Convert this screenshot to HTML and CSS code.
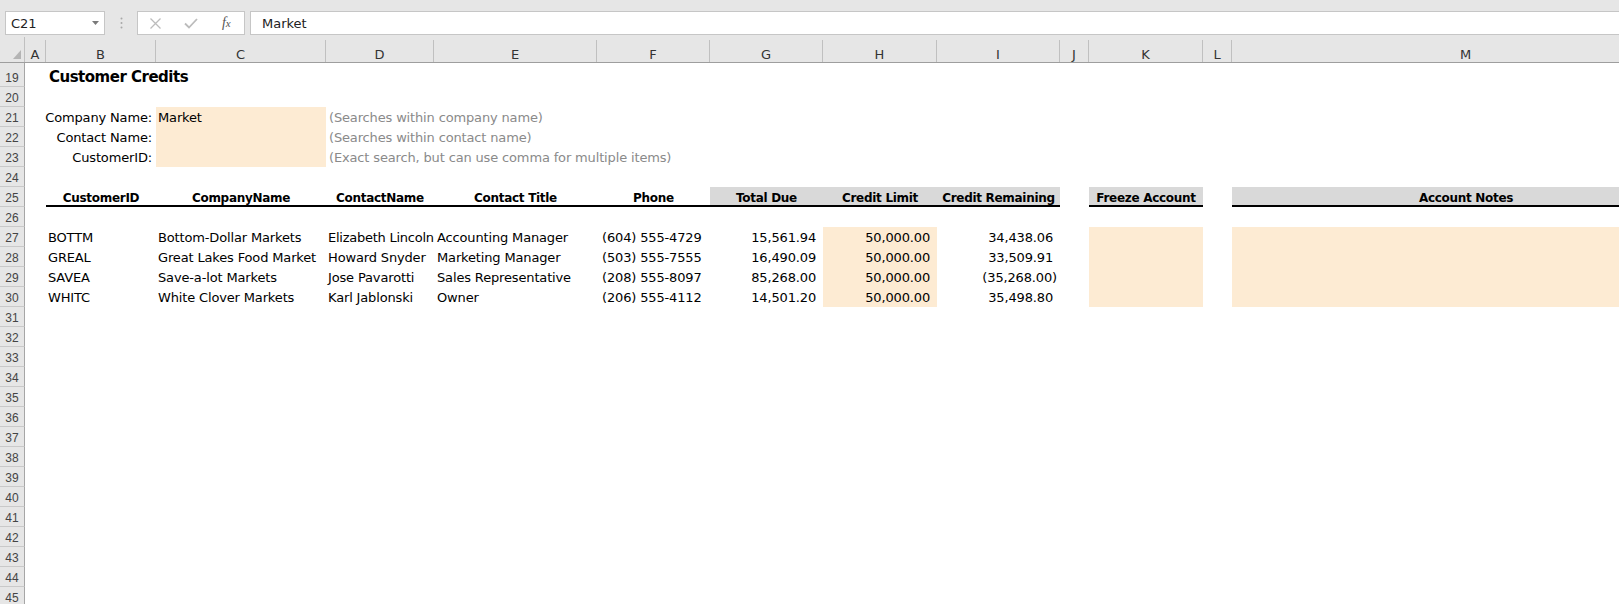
FILE: index.html
```html
<!DOCTYPE html>
<html>
<head>
<meta charset="utf-8">
<title>Customer Credits</title>
<link rel="stylesheet" href="styles.css">
</head>
<body>
<div class="app">
  <div class="toolbar">
    <div class="namebox">
      <span class="nb-text">C21</span>
      <svg class="nb-arrow" width="7" height="4" viewBox="0 0 7 4"><polygon points="0,0 7,0 3.5,4" fill="#7a7a7a"/></svg>
    </div>
    <svg class="grip" width="3" height="12" viewBox="0 0 3 12">
      <circle cx="1.5" cy="1.5" r="1" fill="#a8a8a8"/>
      <circle cx="1.5" cy="6" r="1" fill="#a8a8a8"/>
      <circle cx="1.5" cy="10.5" r="1" fill="#a8a8a8"/>
    </svg>
    <div class="fxbox">
      <span class="fx-slot"><svg width="11" height="11" viewBox="0 0 11 11"><path d="M0.5 0.5 L10.5 10.5 M10.5 0.5 L0.5 10.5" stroke="#bcbcbc" stroke-width="1.3" fill="none"/></svg></span>
      <span class="fx-slot"><svg width="14" height="11" viewBox="0 0 14 11"><path d="M1 5.5 L5 9.5 L13 1" stroke="#bcbcbc" stroke-width="1.8" fill="none"/></svg></span>
      <span class="fx-slot"><span class="fx">f<span class="fxx">x</span></span></span>
    </div>
    <div class="formula">Market</div>
  </div>

  <div class="sheet">
    <div class="row colheads">
      <div class="corner"><svg width="8" height="9" viewBox="0 0 8 9"><polygon points="8,0 8,9 0,9" fill="#b4b4b4"/></svg></div>
      <div class="ch">A</div><div class="ch">B</div><div class="ch">C</div><div class="ch">D</div>
      <div class="ch">E</div><div class="ch">F</div><div class="ch">G</div><div class="ch">H</div>
      <div class="ch">I</div><div class="ch">J</div><div class="ch">K</div><div class="ch">L</div>
      <div class="ch">M</div>
    </div>

    <div class="row tall">
      <div class="rh">19</div><div class="c"></div>
      <div class="c title">Customer Credits</div>
    </div>
    <div class="row"><div class="rh">20</div></div>
    <div class="row">
      <div class="rh">21</div><div class="c"></div>
      <div class="c lbl">Company Name:</div>
      <div class="c peach">Market</div>
      <div class="c hint">(Searches within company name)</div>
    </div>
    <div class="row">
      <div class="rh">22</div><div class="c"></div>
      <div class="c lbl">Contact Name:</div>
      <div class="c peach"></div>
      <div class="c hint">(Searches within contact name)</div>
    </div>
    <div class="row">
      <div class="rh">23</div><div class="c"></div>
      <div class="c lbl">CustomerID:</div>
      <div class="c peach"></div>
      <div class="c hint">(Exact search, but can use comma for multiple items)</div>
    </div>
    <div class="row"><div class="rh">24</div></div>
    <div class="row">
      <div class="rh">25</div><div class="c"></div>
      <div class="c th">CustomerID</div>
      <div class="c th">CompanyName</div>
      <div class="c th">ContactName</div>
      <div class="c th">Contact Title</div>
      <div class="c th">Phone</div>
      <div class="c th gray">Total Due</div>
      <div class="c th gray">Credit Limit</div>
      <div class="c th gray">Credit Remaining</div>
      <div class="c"></div>
      <div class="c th gray">Freeze Account</div>
      <div class="c"></div>
      <div class="c th gray">Account Notes</div>
    </div>
    <div class="row"><div class="rh">26</div></div>
    <div class="row">
      <div class="rh">27</div><div class="c"></div>
      <div class="c">BOTTM</div>
      <div class="c">Bottom-Dollar Markets</div>
      <div class="c tight">Elizabeth Lincoln</div>
      <div class="c pl3">Accounting Manager</div>
      <div class="c ph">(604) 555-4729</div>
      <div class="c num">15,561.94</div>
      <div class="c num peach">50,000.00</div>
      <div class="c num">34,438.06</div>
      <div class="c"></div>
      <div class="c peach"></div>
      <div class="c"></div>
      <div class="c peach"></div>
    </div>
    <div class="row">
      <div class="rh">28</div><div class="c"></div>
      <div class="c">GREAL</div>
      <div class="c">Great Lakes Food Market</div>
      <div class="c">Howard Snyder</div>
      <div class="c pl3">Marketing Manager</div>
      <div class="c ph">(503) 555-7555</div>
      <div class="c num">16,490.09</div>
      <div class="c num peach">50,000.00</div>
      <div class="c num">33,509.91</div>
      <div class="c"></div>
      <div class="c peach"></div>
      <div class="c"></div>
      <div class="c peach"></div>
    </div>
    <div class="row">
      <div class="rh">29</div><div class="c"></div>
      <div class="c">SAVEA</div>
      <div class="c">Save-a-lot Markets</div>
      <div class="c">Jose Pavarotti</div>
      <div class="c pl3">Sales Representative</div>
      <div class="c ph">(208) 555-8097</div>
      <div class="c num">85,268.00</div>
      <div class="c num peach">50,000.00</div>
      <div class="c num neg">(35,268.00)</div>
      <div class="c"></div>
      <div class="c peach"></div>
      <div class="c"></div>
      <div class="c peach"></div>
    </div>
    <div class="row">
      <div class="rh">30</div><div class="c"></div>
      <div class="c">WHITC</div>
      <div class="c">White Clover Markets</div>
      <div class="c">Karl Jablonski</div>
      <div class="c pl3">Owner</div>
      <div class="c ph">(206) 555-4112</div>
      <div class="c num">14,501.20</div>
      <div class="c num peach">50,000.00</div>
      <div class="c num">35,498.80</div>
      <div class="c"></div>
      <div class="c peach"></div>
      <div class="c"></div>
      <div class="c peach"></div>
    </div>
    <div class="row"><div class="rh">31</div></div>
    <div class="row"><div class="rh">32</div></div>
    <div class="row"><div class="rh">33</div></div>
    <div class="row"><div class="rh">34</div></div>
    <div class="row"><div class="rh">35</div></div>
    <div class="row"><div class="rh">36</div></div>
    <div class="row"><div class="rh">37</div></div>
    <div class="row"><div class="rh">38</div></div>
    <div class="row"><div class="rh">39</div></div>
    <div class="row"><div class="rh">40</div></div>
    <div class="row"><div class="rh">41</div></div>
    <div class="row"><div class="rh">42</div></div>
    <div class="row"><div class="rh">43</div></div>
    <div class="row"><div class="rh">44</div></div>
    <div class="row"><div class="rh">45</div></div>
  </div>
</div>
</body>
</html>
```
FILE: styles.css
```css
* {
  box-sizing: border-box;
  margin: 0;
  padding: 0;
}

html, body {
  margin: 0;
  background: #ffffff;
  overflow: hidden;
}

body {
  width: 1619px;
  height: 604px;
  font-family: "DejaVu Sans", "Noto Sans", sans-serif;
  font-size: 13px;
  color: #000;
}

.app {
  width: 1619px;
  height: 604px;
  overflow: hidden;
}

/* ---------- toolbar / formula bar ---------- */
.toolbar {
  height: 37px;
  background: #e6e6e6;
  display: flex;
  align-items: flex-start;
  padding: 11px 0 0 5px;
}

.namebox {
  width: 100px;
  height: 24px;
  flex: none;
  background: #fff;
  border: 1px solid #c6c6c6;
  display: flex;
  align-items: center;
  justify-content: space-between;
  padding: 0 5px 0 5px;
  color: #222;
}

.nb-arrow {
  display: block;
}

.grip {
  flex: none;
  display: block;
  margin: 6px 0 0 15px;
}

.fxbox {
  width: 108px;
  height: 24px;
  flex: none;
  margin-left: 14px;
  background: #fff;
  border: 1px solid #c6c6c6;
  display: flex;
  align-items: center;
}

.fx-slot {
  width: 36px;
  height: 22px;
  display: flex;
  align-items: center;
  justify-content: center;
}

.fx-slot svg {
  display: block;
}

.fx {
  font-family: "Liberation Serif", "DejaVu Serif", serif;
  font-style: italic;
  font-size: 14px;
  color: #555;
  line-height: 14px;
}

.fxx {
  font-size: 11px;
}

.formula {
  flex: 1;
  height: 24px;
  margin-left: 5px;
  background: #fff;
  border: 1px solid #c6c6c6;
  border-right: none;
  display: flex;
  align-items: center;
  padding-left: 11px;
  color: #222;
}

/* ---------- sheet ---------- */
.sheet {
  width: 1619px;
  overflow: hidden;
}

.row {
  display: grid;
  grid-template-columns: 25px 21px 110px 170px 108px 163px 113px 113px 114px 123px 29px 114px 29px 468px;
  width: 1700px;
  height: 20px;
}

.row.tall {
  height: 24px;
}

.colheads {
  height: 26px;
  background: #e6e6e6;
  border-bottom: 1px solid #9e9e9e;
}

.corner {
  display: flex;
  align-items: flex-end;
  justify-content: flex-end;
  padding: 0 3px 3px 0;
  border-right: 1px solid #c0c0c0;
}

.corner svg {
  display: block;
}

.ch {
  display: flex;
  justify-content: center;
  align-items: flex-end;
  border-right: 1px solid #c0c0c0;
  color: #333;
  font-size: 13px;
  line-height: 15px;
  margin-top: 3px;
}

.rh {
  background: #e6e6e6;
  border-right: 1px solid #a6a6a6;
  border-bottom: 1px solid #c9c9c9;
  font-family: "Liberation Sans", Arial, sans-serif;
  font-size: 12px;
  line-height: 14px;
  color: #444;
  display: flex;
  justify-content: center;
  align-items: flex-end;
  padding-bottom: 1px;
}

.c {
  display: flex;
  align-items: flex-end;
  padding: 0 2px 1px 2px;
  line-height: 16px;
  letter-spacing: -0.15px;
  white-space: nowrap;
  overflow: hidden;
}

.tight {
  letter-spacing: -0.25px;
  overflow: visible;
}

.title {
  font-weight: bold;
  font-size: 15px;
  letter-spacing: -0.5px;
  line-height: 18px;
  padding-left: 3px;
  overflow: visible;
}

.lbl {
  justify-content: flex-end;
  padding-right: 4px;
  overflow: visible;
}

.peach {
  background: #fdebd3;
}

.hint {
  color: #8a8a8a;
  padding-left: 3px;
  overflow: visible;
}

.th {
  font-weight: bold;
  font-size: 12px;
  letter-spacing: -0.3px;
  line-height: 14px;
  justify-content: center;
  border-bottom: 2px solid #000;
  padding-bottom: 0;
  overflow: visible;
}

.th.gray {
  background: #d9d9d9;
}

.pl3 {
  padding-left: 3px;
}

.ph {
  padding-left: 5px;
}

.num {
  justify-content: flex-end;
  padding-right: 7px;
}

.num.neg {
  padding-right: 3px;
}
```
